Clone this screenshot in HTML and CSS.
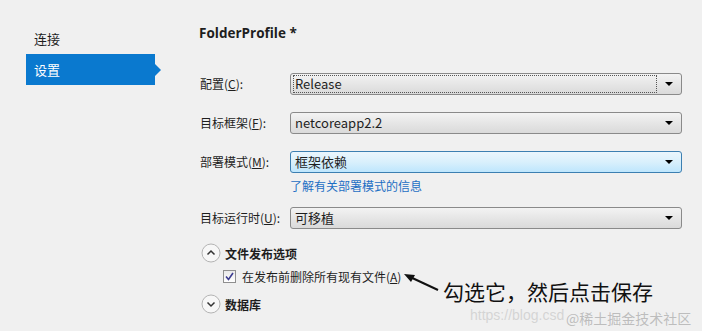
FILE: index.html
```html
<!DOCTYPE html>
<html lang="zh-CN">
<head>
    <meta charset="UTF-8">
    <title>FolderProfile</title>
    <link rel="stylesheet" href="styles.css">
</head>
<body>
    <div class="page">
        <div class="side-nav">
            <div class="nav-item">连接</div>
            <div class="nav-item active">设置</div>
        </div>

        <div class="main">
            <div class="title">FolderProfile *</div>

            <div class="form">
                <div class="label">配置(<u>C</u>):</div>
                <div class="select focused">
                    <div class="select-value">Release</div>
                    <div class="caret"></div>
                </div>

                <div class="label">目标框架(<u>F</u>):</div>
                <div class="select">
                    <div class="select-value">netcoreapp2.2</div>
                    <div class="caret"></div>
                </div>

                <div class="label">部署模式(<u>M</u>):</div>
                <div class="select hot">
                    <div class="select-value">框架依赖</div>
                    <div class="caret"></div>
                </div>

                <div></div>
                <a class="link" href="#">了解有关部署模式的信息</a>

                <div class="label">目标运行时(<u>U</u>):</div>
                <div class="select">
                    <div class="select-value">可移植</div>
                    <div class="caret"></div>
                </div>
            </div>

            <div class="section">
                <div class="section-head">
                    <svg class="toggle" width="20" height="20" viewBox="0 0 20 20">
                        <circle cx="10" cy="10" r="9" fill="#f7f7f7" stroke="#b4b4b4"/>
                        <path d="M6.5 11.5 L10 8 L13.5 11.5" fill="none" stroke="#333" stroke-width="1.5"/>
                    </svg>
                    <span>文件发布选项</span>
                </div>
                <label class="check-row">
                    <span class="checkbox">
                        <svg width="9" height="9" viewBox="0 0 9 9">
                            <path d="M1 4.5 L3.5 7.5 L8 1" fill="none" stroke="#3b3b8f" stroke-width="1.6"/>
                        </svg>
                    </span>
                    <span>在发布前删除所有现有文件(<u>A</u>)</span>
                </label>
                <div class="section-head">
                    <svg class="toggle" width="20" height="20" viewBox="0 0 20 20">
                        <circle cx="10" cy="10" r="9" fill="#f7f7f7" stroke="#b4b4b4"/>
                        <path d="M6.5 8.5 L10 12 L13.5 8.5" fill="none" stroke="#333" stroke-width="1.5"/>
                    </svg>
                    <span>数据库</span>
                </div>
            </div>
        </div>
    </div>

    <!-- annotation drawn over the screenshot -->
    <svg class="arrow" width="40" height="24" viewBox="0 0 40 24">
        <path d="M36 19 L6 5" stroke="#111" stroke-width="2"/>
        <path d="M2 3 L13 4 L9 11 Z" fill="#111"/>
    </svg>
    <div class="note">勾选它，然后点击保存</div>
    <div class="watermark-url">https://blog.csd</div>
    <div class="watermark">@稀土掘金技术社区</div>
</body>
</html>
```

FILE: styles.css
```css
body {
    margin: 0;
    padding: 0;
    width: 702px;
    height: 331px;
    overflow: hidden;
    position: relative;
    background-color: #f0f0f0;
    font-family: "Noto Sans CJK SC", "Noto Sans", sans-serif;
    font-size: 12px;
    color: #1e1e1e;
}

.page {
    display: flex;
}

.side-nav {
    width: 129px;
    margin-left: 26px;
    padding-top: 23px;
}

.nav-item {
    position: relative;
    height: 31px;
    line-height: 31px;
    padding-left: 8px;
    font-size: 13px;
}

.nav-item.active {
    background-color: #0a79cf;
    color: #fff;
}

.nav-item.active::after {
    content: "";
    position: absolute;
    right: -6px;
    top: 10px;
    border-top: 6px solid transparent;
    border-bottom: 6px solid transparent;
    border-left: 6px solid #0a79cf;
}

.main {
    margin-left: 44px;
    padding-top: 22px;
    width: 483px;
}

.title {
    font-family: "Open Sans", "Noto Sans", sans-serif;
    font-weight: 700;
    font-size: 13.5px;
    height: 22px;
    line-height: 22px;
}

.form {
    display: grid;
    grid-template-columns: 90px 392px;
    row-gap: 17px;
    margin-top: 29px;
    margin-left: 1px;
}

.label {
    height: 22px;
    line-height: 22px;
    font-size: 12px;
}

.select {
    display: flex;
    align-items: center;
    height: 22px;
    box-sizing: border-box;
    border: 1px solid #8a8a8a;
    border-radius: 3px;
    background: linear-gradient(#f3f3f3, #e6e6e6 50%, #dadada);
    padding: 0 2px;
}

.select.focused .select-value {
    outline: 1px dotted #555;
    outline-offset: -1px;
    margin-right: 4px;
}

.select.hot {
    border-color: #3c7fb1;
    background: linear-gradient(#eaf6fd, #d9f0fc 50%, #bee6fd);
}

.select-value {
    flex: 1;
    height: 18px;
    line-height: 18px;
    padding-left: 2px;
    font-size: 13px;
}

.caret {
    width: 0;
    height: 0;
    margin: 0 6px 0 4px;
    border-left: 4px solid transparent;
    border-right: 4px solid transparent;
    border-top: 4px solid #000;
}

.link {
    margin-top: -12px;
    margin-bottom: -8px;
    line-height: 16px;
    color: #1e6fc4;
    text-decoration: none;
    font-size: 12px;
}

.section {
    margin-top: 14px;
    margin-left: 2px;
}

.section-head {
    display: flex;
    align-items: center;
    gap: 4px;
    height: 20px;
    font-weight: 700;
    font-size: 12px;
}

.check-row {
    display: flex;
    align-items: center;
    gap: 6px;
    height: 20px;
    margin: 3px 0 8px 22px;
    font-size: 12px;
}

.checkbox {
    display: flex;
    align-items: center;
    justify-content: center;
    width: 11px;
    height: 11px;
    border: 1px solid #8f8f8f;
    background: linear-gradient(#e9e9e9, #ffffff);
}

.arrow {
    position: absolute;
    left: 402px;
    top: 271px;
}

.note {
    position: absolute;
    left: 443px;
    top: 279px;
    font-size: 21px;
    line-height: 24px;
    color: #111;
    font-family: "Noto Sans CJK SC", sans-serif;
}

.watermark-url {
    position: absolute;
    left: 470px;
    top: 308px;
    line-height: 15px;
    font-family: "Liberation Sans", sans-serif;
    font-size: 14px;
    color: rgba(200, 200, 200, 0.7);
}

.watermark {
    position: absolute;
    left: 566px;
    top: 308px;
    font-size: 14px;
    color: rgba(180, 180, 180, 0.85);
}
```
